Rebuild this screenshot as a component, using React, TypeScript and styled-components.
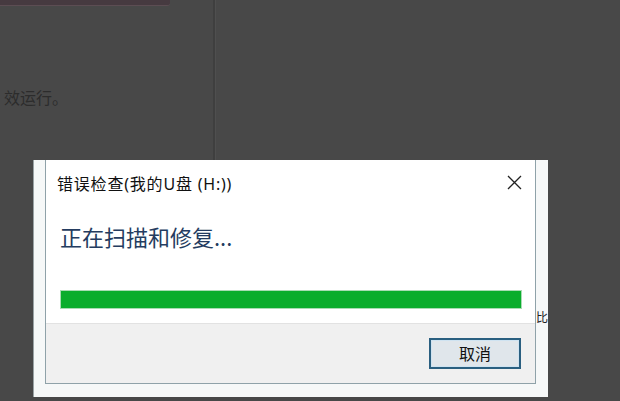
import React from "react";
import styled, { createGlobalStyle } from "styled-components";

const GlobalStyle = createGlobalStyle`
  html, body {
    margin: 0;
    padding: 0;
    background: #484848;
    overflow: hidden;
  }
  * {
    box-sizing: border-box;
  }
`;

const Desktop = styled.div`
  position: relative;
  width: 620px;
  height: 401px;
  background: #484848;
  overflow: hidden;
  font-family: "Noto Sans", "Noto Sans CJK SC", sans-serif;
`;

const BackPane = styled.div`
  width: 215px;
  height: 160px;
  border-right: 2px solid #3f3f3f;
  box-shadow: 1px 0 0 #4f4f4f;
  display: flex;
  flex-direction: column;
`;

const TabStrip = styled.div`
  width: 170px;
  height: 6px;
  background: #463a40;
  border-bottom: 1px solid #5c4d53;
  border-bottom-right-radius: 3px;
`;

const FadedText = styled.div`
  margin: 80px 0 0 4px;
  font-size: 16px;
  line-height: 22px;
  color: #2c2c2c;
  font-family: "Noto Sans CJK SC", sans-serif;
`;

const BackWindow = styled.div`
  position: absolute;
  left: 33px;
  top: 160px;
  width: 515px;
  height: 237px;
  background: #f6f8f8;
  border-left: 1px solid #9aa3a5;
  display: flex;
  justify-content: flex-end;
  align-items: flex-start;
  padding-top: 150px;
`;

const BackLabel = styled.span`
  font-size: 12px;
  line-height: 14px;
  color: #222;
  margin-right: 0;
  font-family: "Noto Sans CJK SC", sans-serif;
`;

const Dialog = styled.div`
  position: absolute;
  left: 45px;
  top: 160px;
  width: 491px;
  height: 224px;
  background: #ffffff;
  border: 1px solid #8fa2a9;
  border-top: none;
  display: flex;
  flex-direction: column;
  font-family: "Noto Sans", "Noto Sans CJK SC", sans-serif;
`;

const TitleBar = styled.div`
  height: 46px;
  display: flex;
  align-items: center;
  justify-content: space-between;
  padding: 0 13px 0 11px;
`;

const Title = styled.span`
  font-size: 16px;
  color: #111;
  letter-spacing: 0.8px;
`;

const CloseButton = styled.button`
  border: none;
  background: transparent;
  padding: 0;
  width: 16px;
  height: 16px;
  display: flex;
  align-items: center;
  justify-content: center;
  cursor: pointer;
`;

const Body = styled.div`
  flex: 1;
  padding: 15px 13px 14px 14px;
  display: flex;
  flex-direction: column;
`;

const Instruction = styled.div`
  font-size: 22px;
  line-height: 30px;
  color: #243c60;
  font-family: "Noto Sans CJK SC", sans-serif;
`;

const Progress = styled.div`
  margin-top: 39px;
  height: 19px;
  border: 1px solid #a9dcb3;
  background: #e6e6e6;
`;

const ProgressFill = styled.div<{ $value: number }>`
  height: 100%;
  width: ${(p) => p.$value}%;
  background: #0aad2c;
`;

const Footer = styled.div`
  height: 61px;
  background: #f0f0f0;
  border-top: 1px solid #e2e2e2;
  display: flex;
  align-items: center;
  justify-content: flex-end;
  padding-right: 14px;
`;

const Button = styled.button`
  width: 92px;
  height: 31px;
  border: 2px solid #2a5f80;
  box-shadow: inset 0 0 0 1px #cfe3f1;
  background: #e0e6eb;
  font-family: "Noto Sans CJK SC", sans-serif;
  font-size: 16px;
  color: #111;
  padding: 0;
  cursor: pointer;
`;

const App = () => {
  return (
    <Desktop>
      <GlobalStyle />
      <BackPane>
        <TabStrip />
        <FadedText>效运行。</FadedText>
      </BackPane>
      <BackWindow>
        <BackLabel>比</BackLabel>
      </BackWindow>
      <Dialog>
        <TitleBar>
          <Title>错误检查(我的U盘 (H:))</Title>
          <CloseButton aria-label="关闭">
            <svg width="15" height="15" viewBox="0 0 15 15">
              <path d="M1 1 L14 14 M14 1 L1 14" stroke="#222" strokeWidth="1.3" />
            </svg>
          </CloseButton>
        </TitleBar>
        <Body>
          <Instruction>正在扫描和修复...</Instruction>
          <Progress>
            <ProgressFill $value={100} />
          </Progress>
        </Body>
        <Footer>
          <Button>取消</Button>
        </Footer>
      </Dialog>
    </Desktop>
  );
};

export default App;
